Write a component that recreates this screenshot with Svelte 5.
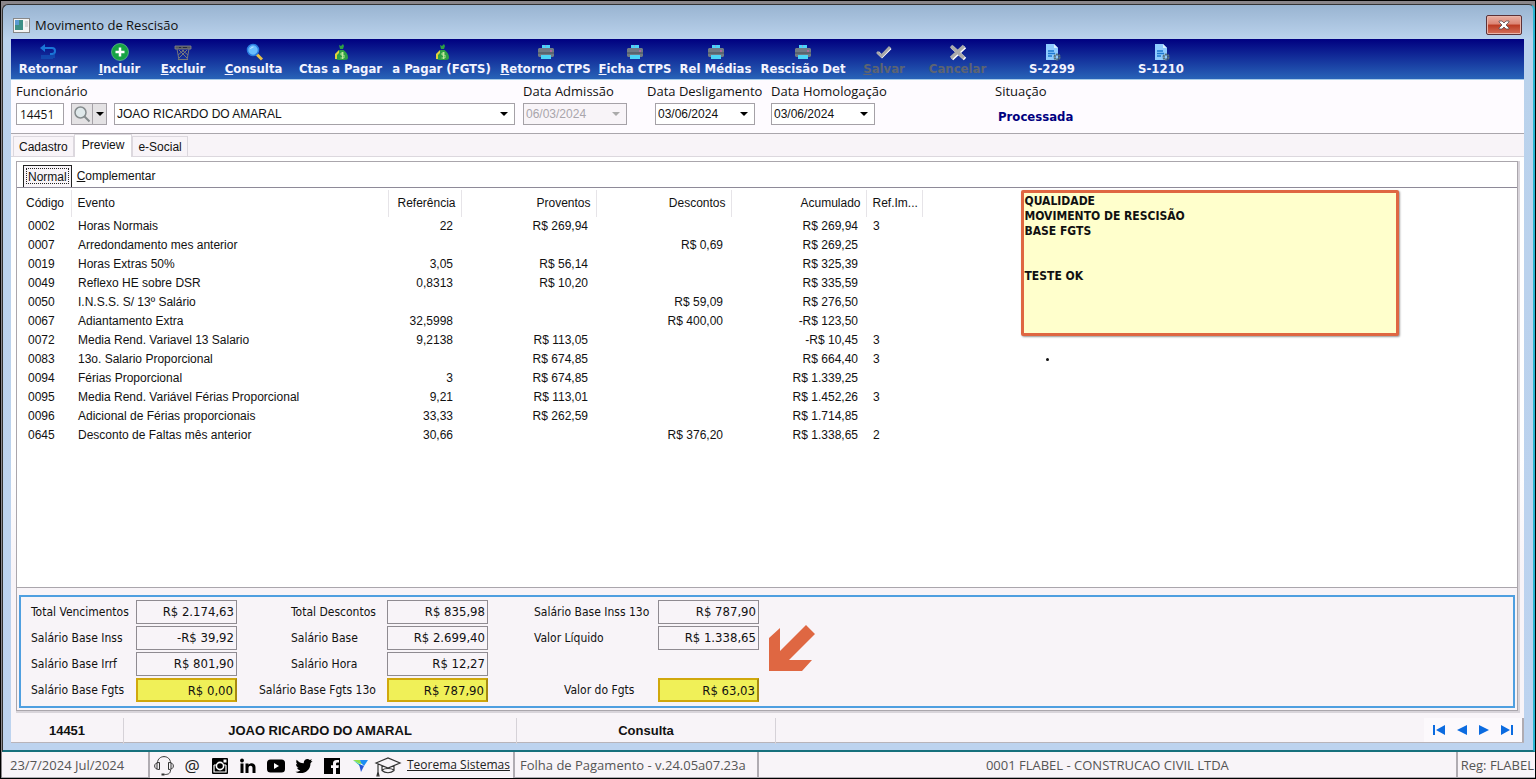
<script>
	const actions = [
		{ label: "Retornar", icon: "back" },
		{ label: "Incluir", icon: "add", key: true },
		{ label: "Excluir", icon: "trash", key: true },
		{ label: "Consulta", icon: "search", key: true },
		{ label: "Ctas a Pagar", icon: "money" },
		{ label: "a Pagar (FGTS)", icon: "money" },
		{ label: "Retorno CTPS", icon: "printer", key: true },
		{ label: "Ficha CTPS", icon: "printer", key: true },
		{ label: "Rel Médias", icon: "printer" },
		{ label: "Rescisão Det", icon: "printer" },
		{ label: "Salvar", icon: "check", key: true, disabled: true },
		{ label: "Cancelar", icon: "cross", disabled: true },
		{ label: "S-2299", icon: "doc" },
		{ label: "S-1210", icon: "doc" },
	];

	const tabs = ["Cadastro", "Preview", "e-Social"];
	let tab = "Preview";

	const columns = ["Código", "Evento", "Referência", "Proventos", "Descontos", "Acumulado", "Ref.Im..."];
	const rows = [
		["0002", "Horas Normais", "22", "R$ 269,94", "", "R$ 269,94", "3"],
		["0007", "Arredondamento mes anterior", "", "", "R$ 0,69", "R$ 269,25", ""],
		["0019", "Horas Extras 50%", "3,05", "R$ 56,14", "", "R$ 325,39", ""],
		["0049", "Reflexo HE sobre DSR", "0,8313", "R$ 10,20", "", "R$ 335,59", ""],
		["0050", "I.N.S.S. S/ 13º Salário", "", "", "R$ 59,09", "R$ 276,50", ""],
		["0067", "Adiantamento Extra", "32,5998", "", "R$ 400,00", "-R$ 123,50", ""],
		["0072", "Media Rend. Variavel 13 Salario", "9,2138", "R$ 113,05", "", "-R$ 10,45", "3"],
		["0083", "13o. Salario Proporcional", "", "R$ 674,85", "", "R$ 664,40", "3"],
		["0094", "Férias Proporcional", "3", "R$ 674,85", "", "R$ 1.339,25", ""],
		["0095", "Media Rend. Variável Férias Proporcional", "9,21", "R$ 113,01", "", "R$ 1.452,26", "3"],
		["0096", "Adicional de Férias proporcionais", "33,33", "R$ 262,59", "", "R$ 1.714,85", ""],
		["0645", "Desconto de Faltas mês anterior", "30,66", "", "R$ 376,20", "R$ 1.338,65", "2"],
	];

	// one group for each pair of label / value columns
	const totals = [
		[
			{ id: "venc", label: "Total Vencimentos", value: "R$ 2.174,63" },
			{ id: "inss", label: "Salário Base Inss", value: "-R$ 39,92" },
			{ id: "irrf", label: "Salário Base Irrf", value: "R$ 801,90" },
			{ id: "fgts", label: "Salário Base Fgts", value: "R$ 0,00", mark: true },
		],
		[
			{ id: "desc", label: "Total Descontos", value: "R$ 835,98" },
			{ id: "base", label: "Salário Base", value: "R$ 2.699,40" },
			{ id: "hora", label: "Salário Hora", value: "R$ 12,27" },
			{ id: "fgts13", label: "Salário Base Fgts 13o", value: "R$ 787,90", mark: true, wide: true },
		],
		[
			{ id: "inss13", label: "Salário Base Inss 13o", value: "R$ 787,90" },
			{ id: "liq", label: "Valor Líquido", value: "R$ 1.338,65" },
			null,
			{ id: "vfgts", label: "Valor do Fgts", value: "R$ 63,03", mark: true, inset: true },
		],
	];

	const links = ["suporte", "email", "instagram", "linkedin", "youtube", "twitter", "facebook", "teorema", "cursos"];
</script>

<div class="desktop">
	<main class="window">
		<header class="titlebar">
			<svg class="app-icon" viewBox="0 0 17 15">
				<rect x="0.5" y="0.5" width="16" height="14" fill="#f4f4f4" stroke="#888" />
				<rect x="2" y="2" width="8" height="10" fill="#3d8f86" />
				<rect x="2" y="2" width="4" height="5" fill="#5b9ad0" />
				<path d="M12 4h3M12 6h3M12 8h3" stroke="#bbb" />
			</svg>
			<h1>Movimento de Rescisão</h1>
			<button class="close" aria-label="Fechar">
				<svg viewBox="0 0 12 10"><path d="M1 1h3l2 2 2-2h3v1L8 5l3 3v1H8L6 7 4 9H1V8l3-3-3-3z" fill="#fff" stroke="#5a4a52" stroke-width=".8" /></svg>
			</button>
		</header>

		<nav class="toolbar">
			{#each actions as action}
				<button disabled={action.disabled}>
					<svg viewBox="0 0 18 18">
						{#if action.icon === "back"}
							<path d="M5 5h8a3 3 0 0 1 0 6h-2" fill="none" stroke="#1a76d8" stroke-width="2" />
							<path d="M1 5l5-4v8z" fill="#1a76d8" />
							<path d="M3 12v4M5 12v4M7 12v4M9 12v4M11 12v4M13 12v4M15 10v5" stroke="#1463c4" />
						{:else if action.icon === "add"}
							<circle cx="9" cy="9" r="8.500" fill="#17a345" stroke="#7ed49a" stroke-width=".6" />
							<path d="M9 4.500v9M4.500 9h9" stroke="#fff" stroke-width="2.500" />
						{:else if action.icon === "trash"}
							<path d="M1 3h16v3H1z" fill="#53565c" stroke="#85868a" stroke-width=".8" />
							<path d="M3 6l2 11M15 6l-2 11M4 16.500h10M5 7l8 8M13 7l-8 8M8 7l6 5M10 7l-6 5" fill="none" stroke="#77787c" />
							<path d="M5 4.500h2M9 4.500h4" stroke="#242a40" />
						{:else if action.icon === "search"}
							<path d="M12 11.500l5 5" stroke="#e9c14a" stroke-width="3" />
							<circle cx="8" cy="7" r="5.500" fill="#69bdff" stroke="#2a7de0" stroke-width="1.500" />
							<path d="M5.500 6a3 3 0 0 1 3-2" fill="none" stroke="#c8eaff" />
						{:else if action.icon === "money"}
							<path d="M7 2l2 1 2-2 1 2-1 3H8zM7.500 7h4c3 2 4.500 5 4.500 7.500S14 17 9.500 17 3 17 3 14.500 5 9 7.500 7z" fill="#2da044" />
							<path d="M3 16v-5l4-4v3l-2 2v4z" fill="#e0d23c" />
							<path d="M12 10H9v2h3v3H8.500M10.500 9v7" fill="none" stroke="#d6f1a8" stroke-width=".8" />
						{:else if action.icon === "printer"}
							<path d="M5 2h8v4H5z" fill="#4cd4f7" />
							<path d="M2 5h14l1 1v7l-1 1H2l-1-1V6z" fill="#707b85" />
							<path d="M1 9h16v2H1z" fill="#59646f" />
							<path d="M4 12h10v4H4z" fill="#4cd4f7" />
							<path d="M8 3h1M13 8h2" stroke="#e45eb0" />
						{:else if action.icon === "check"}
							<path d="M3 9.500l4 4L15.500 5" fill="none" stroke="#fff" stroke-width="3" />
							<path d="M2 9l4.500 4L15 4" fill="none" stroke="#a8a8a8" stroke-width="2.800" />
						{:else if action.icon === "cross"}
							<path d="M3 4l13 12M16 4L3 16" stroke="#fff" stroke-width="3.500" />
							<path d="M2 3l13 12M15 3L2 15" stroke="#ababab" stroke-width="3.500" />
						{:else}
							<path d="M3 1h8l4 4v12H3z" fill="#8ecbff" />
							<path d="M11 1v4h4z" fill="#d9efff" />
							<path d="M5 8h6M5 10.500h7M5 13h4" stroke="#1d78d0" stroke-width="1.300" />
							<circle cx="14" cy="14" r="2.500" fill="none" stroke="#56707c" stroke-width="2.200" stroke-dasharray="2 .6" />
						{/if}
					</svg>
					<span>{#if action.key}<u>{action.label[0]}</u>{action.label.slice(1)}{:else}{action.label}{/if}</span>
				</button>
			{/each}
		</nav>

		<form class="employee">
			<div class="group">
				<label for="func">Funcionário</label>
				<div class="line">
					<input id="func" class="code" type="text" value="14451" />
					<div class="split">
						<button type="button" aria-label="Pesquisar">
							<svg viewBox="0 0 18 18">
								<circle cx="7.500" cy="7.500" r="5.500" fill="#dfe8ea" stroke="#858b8d" stroke-width="1.500" />
								<path d="M11.500 11.500l5 5" stroke="#858b8d" stroke-width="2" />
							</svg>
						</button>
						<button type="button" class="more" aria-label="Mais opções">
							<svg viewBox="0 0 8 4"><path d="M0 0h8L4 4z" /></svg>
						</button>
					</div>
					<select class="name" aria-label="Nome do funcionário"><option>JOAO RICARDO DO AMARAL</option></select>
				</div>
			</div>
			<div class="group">
				<label for="adm">Data Admissão</label>
				<select id="adm" class="date" disabled><option>06/03/2024</option></select>
			</div>
			<div class="group">
				<label for="desl">Data Desligamento</label>
				<select id="desl" class="date short"><option>03/06/2024</option></select>
			</div>
			<div class="group">
				<label for="homol">Data Homologação</label>
				<select id="homol" class="date"><option>03/06/2024</option></select>
			</div>
			<div class="group">
				<span class="caption">Situação</span>
				<strong>Processada</strong>
			</div>
		</form>

		<div class="tabs">
			{#each tabs as name}
				<button class:active={tab === name} on:click={() => (tab = name)}>{name}</button>
			{/each}
		</div>

		<section class="page">
			<div class="frame">
				<div class="subtabs">
					<button class="current">Normal</button>
					<button><u>C</u>omplementar</button>
				</div>

				<div class="list">
					<table>
						<colgroup>
							<col class="c-code" /><col class="c-event" /><col class="c-ref" />
							<col class="c-money" /><col class="c-money" /><col class="c-money" /><col class="c-imp" />
						</colgroup>
						<thead>
							<tr>
								{#each columns as column, i}
									<th class:num={i > 1 && i < 6}>{column}</th>
								{/each}
							</tr>
						</thead>
						<tbody>
							{#each rows as row}
								<tr>
									{#each row as cell, i}
										<td class:num={i > 1 && i < 6}>{cell}</td>
									{/each}
								</tr>
							{/each}
						</tbody>
					</table>
					<aside>
						<div class="note">
							QUALIDADE<br />MOVIMENTO DE RESCISÃO<br />BASE FGTS<br /><br /><br />TESTE OK
						</div>
						<div class="dot"></div>
					</aside>
				</div>

				<div class="totals">
					{#each totals as group}
						<div class="column">
							{#each group as item}
								{#if item}
									<label for={item.id} class:wide={item.wide} class:inset={item.inset}>{item.label}</label>
									<input id={item.id} class:mark={item.mark} type="text" value={item.value} readonly />
								{:else}
									<span></span><span></span>
								{/if}
							{/each}
						</div>
					{/each}
					<svg class="arrow" viewBox="0 0 48 48"><path d="M38 1l9 9-26 26h23L34 47H1V14L12 4v23z" fill="#df6742" /></svg>
				</div>
			</div>
		</section>

		<div class="status">
			<span>14451</span>
			<span>JOAO RICARDO DO AMARAL</span>
			<span>Consulta</span>
			<div class="pager">
				<button aria-label="Primeiro"><svg viewBox="0 0 14 12"><path d="M1 1h2v10H1zM13 1v10L4 6z" /></svg></button>
				<button aria-label="Anterior"><svg viewBox="0 0 14 12"><path d="M12 1v10L2 6z" /></svg></button>
				<button aria-label="Próximo"><svg viewBox="0 0 14 12"><path d="M2 1v10l10-5z" /></svg></button>
				<button aria-label="Último"><svg viewBox="0 0 14 12"><path d="M11 1h2v10h-2zM1 1v10l9-5z" /></svg></button>
			</div>
		</div>
	</main>

	<footer>
		<span class="today">23/7/2024 Jul/2024</span>
		<div class="links">
			{#each links as name}
				<a href="#{name}" aria-label={name}>
					{#if name === "email"}
						<span class="at">@</span>
					{:else}
						<svg viewBox="0 0 20 20">
							{#if name === "suporte"}
								<path d="M3.500 7C3.500-1.500 16.500-1.500 16.500 7M16.500 14c0 4-3 4.500-6 4.500" fill="none" stroke="#333" />
								<path d="M5.500 6.500v7C-1 14-1 6 5.500 6.500zM3 7v6M14.500 6.500v7C21 14 21 6 14.500 6.500zM17 7v6" fill="none" stroke="#333" />
								<rect x="7.500" y="17.500" width="3" height="2" fill="#333" />
							{:else if name === "instagram"}
								<rect x="2" y="2" width="16" height="16" rx="1" />
								<path d="M4 9h3M13 9h3M4 9v7h12V9" fill="none" stroke="#fff" stroke-width="1.200" />
								<circle cx="10" cy="10" r="3.600" stroke="#fff" stroke-width="1.600" />
								<rect x="13.500" y="3.500" width="3" height="3" fill="#fff" />
							{:else if name === "linkedin"}
								<circle cx="4" cy="4.500" r="1.900" />
								<path d="M2.500 7.500h3V17h-3zM7.500 7.500h3v1.300c2-2.600 7-2 7 2.700V17h-3v-5c0-3-4-3-4 0v5h-3z" />
							{:else if name === "youtube"}
								<rect x="1" y="3.500" width="18" height="13" rx="3.500" />
								<path d="M8 7v6l5-3z" fill="#fff" />
							{:else if name === "twitter"}
								<path d="M18.500 5l-2 2.200C16.500 14 11 17.500 6 17c-2 0-3.500-.5-4.500-1.300 2 0 3.500-.5 4.800-1.500-1.800 0-2.800-1.200-3.200-2.500h1.500C2.800 11 2 9.500 2 8l1.500.5C2 7 2 5.200 2.700 3.700 4.500 6 7 7.200 9.800 7.300 9.300 3.500 13.500 1.800 15.800 4L18 3.200l-1.300 2z" />
							{:else if name === "facebook"}
								<path d="M2 2h16v16h-4v-6h2.500l.4-2.700H14V8c0-1 .5-1.500 1.500-1.500H17V4h-2.200C12 4 11 5.500 11 7.500v1.800H9V12h2v6H2z" />
							{:else if name === "teorema"}
								<path d="M3 4h7l2 4-3-.5z" fill="#8fe04a" />
								<path d="M3 4l8 5-1 1z" fill="#25c2b0" />
								<path d="M10 4h8l-4 6-3-3z" fill="#1c8df2" />
								<path d="M9 8l5 2-3 6z" fill="#2455d8" />
							{:else}
								<path d="M-2 7l12-5 12 5-12 5zM4 9.500v5c3 3 9 3 12 0v-5M4 14c3-2 9-2 12 0M0 8v9M-1 20l1-4 1 4z" fill="none" stroke="#333" stroke-width="1.200" />
							{/if}
						</svg>
					{/if}
				</a>
			{/each}
		</div>
		<a class="site" href="#teorema">Teorema Sistemas</a>
		<span class="version">Folha de Pagamento - v.24.05a07.23a</span>
		<span class="company">0001 FLABEL - CONSTRUCAO CIVIL LTDA</span>
		<span class="reg">Reg: FLABEL</span>
	</footer>
</div>

<style>
	:global(body) {
		background: #000;
		font-family: "Open Sans", "Noto Sans", sans-serif;
		font-size: 12px;
		color: #111;
	}
	button,
	input,
	select {
		font: inherit;
		color: inherit;
		margin: 0;
		padding: 0;
		border: none;
		border-radius: 0;
		background: none;
		box-sizing: border-box;
	}
	.desktop {
		display: flex;
		flex-direction: column;
		min-height: 100vh;
		box-sizing: border-box;
		padding: 1px 0 0 1px;
		border: 1px solid #000;
		background: #8a868a;
		overflow: hidden;
	}

	.window {
		flex: 1;
		display: flex;
		flex-direction: column;
		margin-top: 2px;
		padding: 0 9px 7px 8px;
		border: 1px solid #333;
		border-right: 2px solid #29b4d0;
		border-bottom: 2px solid #16707c;
		border-radius: 6px 6px 0 0;
		background: linear-gradient(#99b4d1, #bad2ec 34px, #bdd3ef);
	}
	.titlebar {
		display: flex;
		align-items: center;
		height: 34px;
		padding-top: 6px;
		box-sizing: border-box;
	}
	.app-icon {
		width: 17px;
		height: 15px;
		margin: 0 5px 0 2px;
	}
	h1 {
		flex: 1;
		margin: 0;
		font-size: 13px;
		font-weight: normal;
		line-height: 20px;
	}
	.close {
		display: flex;
		align-items: center;
		justify-content: center;
		width: 36px;
		height: 20px;
		margin-right: 2px;
		border: 1px solid #5c3238;
		border-radius: 2px;
		background: linear-gradient(#eab0a4, #dc8473 45%, #bc3a22 50%, #d3705a);
		box-shadow: inset 0 0 0 1px #e9b5aa;
	}
	.close svg {
		width: 12px;
		height: 10px;
	}

	.toolbar {
		display: grid;
		grid-template-columns: 74px 69px 58px 83px 91px 111px 97px 82px 79px 96px 66px 81px 108px 110px;
		height: 40px;
		border-bottom: 1px solid #a9cbe6;
		background: linear-gradient(#000080, #2864b8);
		color: #f4f4ff;
		font: bold 13px/16px "DejaVu Sans Condensed", "DejaVu Sans", sans-serif;
	}
	.toolbar button {
		display: flex;
		flex-direction: column;
		align-items: center;
		padding-top: 4px;
		white-space: nowrap;
	}
	.toolbar button:disabled {
		color: #5d6472;
	}
	.toolbar svg {
		width: 18px;
		height: 18px;
	}

	.employee {
		display: grid;
		grid-template-columns: 507px 124px 124px 224px auto;
		padding: 1px 5px 7px;
		border-bottom: 1px solid #aaa6ac;
		background: #fefbff;
	}
	.group {
		display: flex;
		flex-direction: column;
		align-items: flex-start;
	}
	.group label,
	.caption {
		margin-bottom: 2px;
		font-size: 13px;
		line-height: 20px;
		white-space: nowrap;
	}
	.line {
		display: flex;
		gap: 7px;
	}
	.employee input,
	.employee select,
	.split {
		height: 22px;
		border: 1px solid #a5a1a7;
		background-color: #fff;
	}
	.code {
		width: 48px;
		padding-left: 3px;
	}
	.split {
		display: flex;
		box-sizing: border-box;
		width: 36px;
		background-color: #e4e2e4;
	}
	.split button {
		flex: 1;
		display: flex;
		align-items: center;
		justify-content: center;
	}
	.split svg {
		width: 18px;
		height: 18px;
	}
	.split .more {
		flex: none;
		width: 14px;
		border-left: 1px solid #a5a1a7;
	}
	.split .more svg {
		width: 8px;
		height: 4px;
	}
	select {
		appearance: none;
		font-family: "Liberation Sans", sans-serif;
		padding-left: 2px;
		background-image: url("data:image/svg+xml,%3Csvg xmlns='http://www.w3.org/2000/svg' viewBox='0 0 8 4'%3E%3Cpath d='M0 0h8L4 4z'/%3E%3C/svg%3E");
		background-repeat: no-repeat;
		background-size: 8px 4px;
		background-position: right 6px center;
	}
	.name {
		width: 401px;
	}
	.date {
		width: 104px;
	}
	.date.short {
		width: 100px;
		margin-left: 8px;
	}
	select:disabled {
		color: #a9a5ab;
		opacity: 1;
		background-color: #f8f4f8;
		background-image: url("data:image/svg+xml,%3Csvg xmlns='http://www.w3.org/2000/svg' viewBox='0 0 8 4'%3E%3Cpath fill='%23aaa' d='M0 0h8L4 4z'/%3E%3C/svg%3E");
	}
	.group strong {
		padding: 5px 3px 0;
		color: #000080;
		font: bold 13px/18px "DejaVu Sans Condensed", "DejaVu Sans", sans-serif;
	}

	.tabs {
		display: flex;
		align-items: flex-end;
		height: 22px;
		padding-left: 2px;
		border-bottom: 1px solid #dcd8de;
		background: #f8f4f8;
		font-family: "Liberation Sans", sans-serif;
	}
	.tabs button {
		height: 20px;
		padding: 0 5px;
		border: 1px solid #dcd8de;
		border-bottom: none;
	}
	.tabs .active {
		height: 23px;
		padding: 0 7px 3px;
		margin-bottom: -1px;
		background: #fff;
	}

	.page {
		flex: 1;
		display: flex;
		flex-direction: column;
		padding: 4px 6px 7px 5px;
		background: linear-gradient(#fff, #fff 300px, #f8f4f8 420px);
	}
	.frame {
		flex: 1;
		display: flex;
		flex-direction: column;
		border: 1px solid #aaa6ac;
		box-shadow: 1px 1px 0 1px #d8d4da;
		background: #f8f4f8;
	}
	.subtabs {
		display: flex;
		height: 25px;
		padding: 3px 6px 0;
		box-sizing: border-box;
		background: #fff;
		font-family: "Liberation Sans", sans-serif;
	}
	.subtabs button {
		padding: 0 5px;
	}
	.subtabs .current {
		border: 1px solid #222;
		border-bottom: none;
		padding: 0 4px;
		background: #f8f4f8;
		outline: 1px dotted #222;
		outline-offset: -4px;
	}

	.list {
		flex: 1;
		display: flex;
		align-items: flex-start;
		gap: 98px;
		border-top: 1px solid #8e8a98;
		border-bottom: 1px solid #aaa6ac;
		background: #fff;
	}
	table {
		table-layout: fixed;
		width: 905px;
		margin-top: 2px;
		border-collapse: collapse;
		font: 12px/19px "Liberation Sans", sans-serif;
	}
	.c-code {
		width: 54px;
	}
	.c-event {
		width: 317px;
	}
	.c-ref {
		width: 73px;
	}
	.c-money {
		width: 135px;
	}
	.c-imp {
		width: 56px;
	}
	th {
		height: 27px;
		padding: 0 5px 0 6px;
		border-right: 1px solid #e6e4e8;
		font-weight: normal;
		text-align: left;
		white-space: nowrap;
	}
	th:first-child {
		padding-left: 9px;
	}
	td {
		height: 19px;
		padding: 0 8px 0 7px;
		white-space: nowrap;
	}
	td:first-child {
		padding-left: 11px;
	}
	.num {
		text-align: right;
	}
	.note {
		width: 378px;
		height: 146px;
		box-sizing: border-box;
		margin-top: 2px;
		padding: 1px;
		border: 3px solid #df6742;
		border-radius: 2px;
		background: #ffffcc;
		box-shadow: 1px 1px 2px #999;
		font: bold 12px/15px "DejaVu Sans Condensed", "DejaVu Sans", sans-serif;
	}
	.dot {
		width: 3px;
		height: 3px;
		margin: 22px 0 0 25px;
		border-radius: 50%;
		background: #111;
	}

	.totals {
		display: flex;
		margin: 7px 2px 2px;
		padding: 3px 0 4px 10px;
		border: 2px solid #4f9fe0;
		font-family: "DejaVu Sans Condensed", "DejaVu Sans", sans-serif;
	}
	.column {
		display: grid;
		grid-template-columns: 105px 101px;
		grid-auto-rows: 24px;
		row-gap: 2px;
		align-items: center;
	}
	.column:nth-child(2) {
		grid-template-columns: 128px 101px;
		margin-left: 22px;
	}
	.column:nth-child(3) {
		grid-template-columns: 124px 101px;
		margin-left: 46px;
	}
	.column label {
		white-space: nowrap;
	}
	.column:nth-child(2) label:not(.wide) {
		padding-left: 32px;
	}
	.column .inset {
		padding-left: 30px;
	}
	.column input {
		width: 101px;
		height: 24px;
		padding: 0 2px 2px 0;
		border: 1px solid #8f8b91;
		font-size: 13px;
		text-align: right;
	}
	.column .mark {
		padding-bottom: 0;
		border: 2px solid #d0a80c;
		border-right-color: #a58a10;
		background: #f0f058;
	}
	.arrow {
		width: 48px;
		height: 48px;
		margin: 24px 0 0 9px;
	}

	.status {
		display: grid;
		grid-template-columns: 113px 393px 259px 1fr;
		height: 24px;
		border-bottom: 1px solid #b8b4ba;
		background: #f8f4f8;
		font: bold 13px/26px "Liberation Sans", sans-serif;
		text-align: center;
	}
	.status > span {
		border-right: 1px solid #d6d2d8;
	}
	.pager {
		justify-self: end;
		display: flex;
		height: 24px;
		width: 100px;
		box-sizing: border-box;
		padding: 0 4px;
		border-right: 2px solid #b0acb2;
		background: #fcf9fc;
	}
	.pager button {
		flex: 1;
		display: flex;
		align-items: center;
		justify-content: center;
	}
	.pager svg {
		width: 14px;
		height: 12px;
		fill: #0b6be0;
	}

	footer {
		display: flex;
		height: 26px;
		background: #f8f4f8;
		color: #555;
		font-size: 13px;
		line-height: 26px;
		white-space: nowrap;
		overflow: hidden;
	}
	footer > span {
		border-right: 2px solid #b0acb2;
		border-bottom: 1px solid #b0acb2;
		box-sizing: border-box;
	}
	.today {
		width: 148px;
		padding-left: 8px;
	}
	.links {
		display: flex;
		padding-top: 2px;
	}
	.links a {
		display: flex;
		align-items: center;
		justify-content: center;
		width: 28px;
		color: #222;
		text-decoration: none;
	}
	.links svg {
		width: 20px;
		height: 20px;
		overflow: visible;
	}
	.at {
		font-size: 17px;
	}
	.site {
		width: 113px;
		padding-left: 5px;
		box-sizing: border-box;
		border-right: 2px solid #b0acb2;
		color: #222;
		font-size: 12px;
	}
	.version {
		width: 244px;
		padding-left: 5px;
	}
	.company {
		flex: 1;
		text-align: center;
	}
	footer .reg {
		flex: none;
		padding: 0 1px 0 3px;
		border-right: none;
	}
</style>
